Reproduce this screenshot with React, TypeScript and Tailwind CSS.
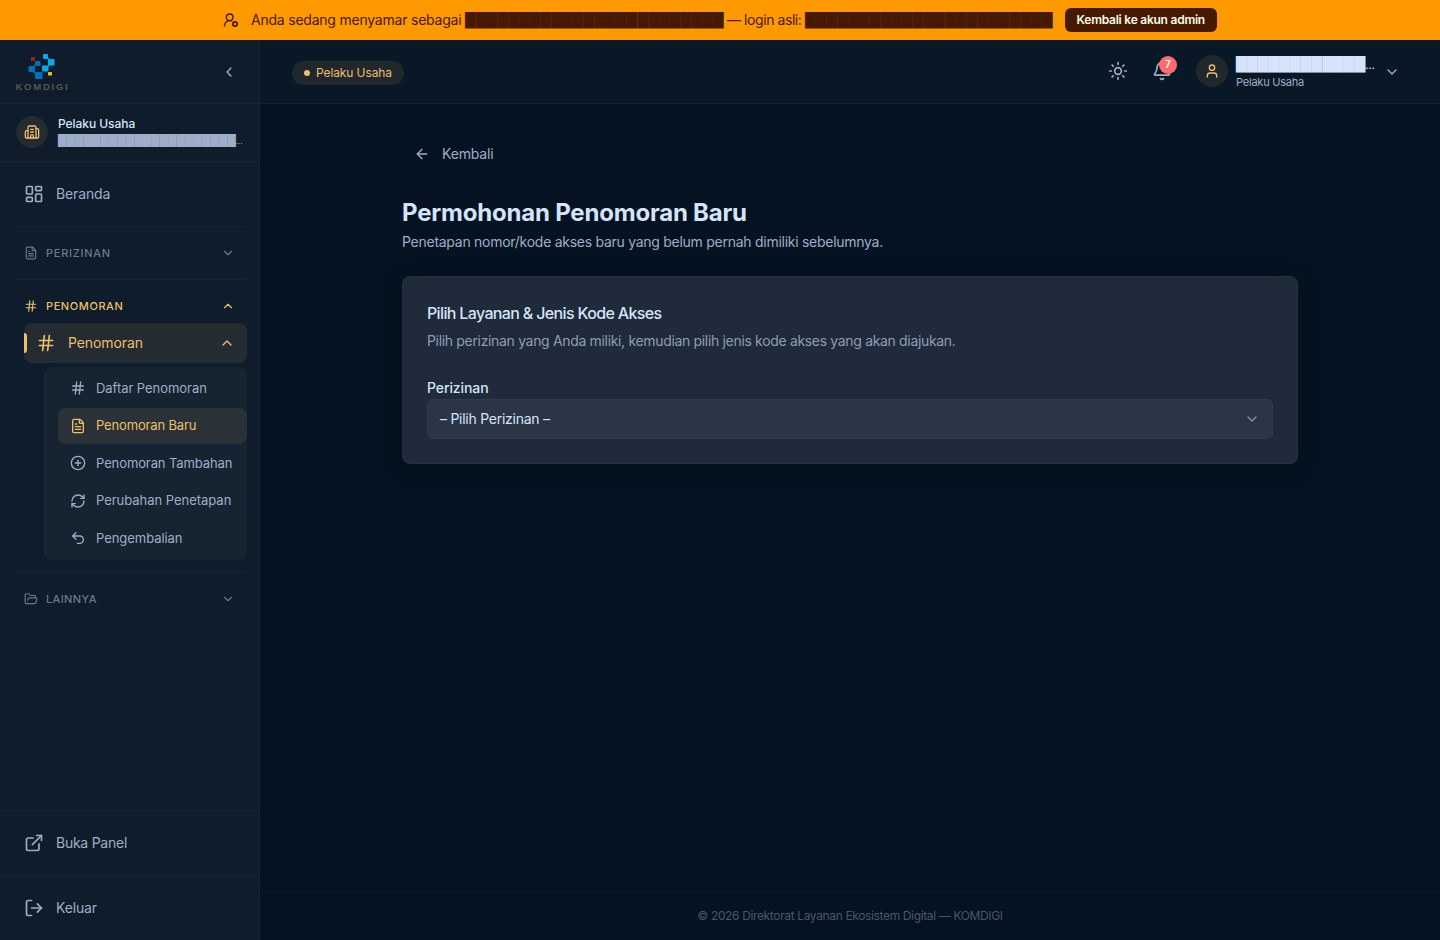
import type { ReactNode } from "react";
import {
  ArrowLeft,
  Bell,
  ChevronDown,
  ChevronLeft,
  ChevronUp,
  CirclePlus,
  ExternalLink,
  FileText,
  FolderOpen,
  Hash,
  LayoutDashboard,
  LogOut,
  RefreshCw,
  Sun,
  Undo2,
  User,
  UserRoundCog,
  Building2,
} from "lucide-react";

const submenu = [
  { label: "Daftar Penomoran", icon: Hash, spacing: "tracking-[-0.05px]" },
  { label: "Penomoran Baru", icon: FileText, active: true, spacing: "tracking-[-0.15px]" },
  { label: "Penomoran Tambahan", icon: CirclePlus, spacing: "tracking-[-0.1px]" },
  { label: "Perubahan Penetapan", icon: RefreshCw, spacing: "tracking-[-0.03px]" },
  { label: "Pengembalian", icon: Undo2, spacing: "tracking-[-0.05px]" },
];

function Masked({ count }: { count: number }) {
  return <span className="font-['DejaVu_Sans'] tracking-normal">{"█".repeat(count)}</span>;
}

function Logo() {
  return (
    <svg width="54" height="38" viewBox="0 0 54 38">
      <g fill="#0072bc">
        <rect x="20" y="8" width="5.5" height="5" rx="1" />
        <rect x="13.5" y="13" width="6.5" height="6" rx="1" />
        <rect x="20" y="19" width="7.5" height="7" rx="1" />
        <path d="M18.5 13L20 11.5V14ZM18 19L20 21V18Z" />
      </g>
      <g fill="#00aeef">
        <rect x="28" y="1" width="5" height="5" rx="1" />
        <rect x="33" y="6" width="6.5" height="6.5" rx="1" />
        <rect x="27" y="12.5" width="6.5" height="6" rx="1" />
        <path d="M32 5L34 7.5V5ZM32 13.5L34 11V13.5Z" />
      </g>
      <rect x="16" y="4" width="4" height="4" rx="0.5" fill="#a31d21" />
      <rect x="33" y="19" width="4" height="3.5" rx="0.5" fill="#f5b91a" />
      <text
        x="0.5"
        y="36.5"
        fontFamily="Liberation Sans"
        fontWeight="700"
        fontSize="9.5"
        letterSpacing="1.75"
        fill="#55565a"
      >
        KOMDIGI
      </text>
    </svg>
  );
}

type SectionProps = { icon: ReactNode; label: string; spacing: string; open?: boolean };

function Section({ icon, label, spacing, open }: SectionProps) {
  return (
    <div
      className={`flex h-8 items-center gap-2 px-3 text-[11px] font-medium ${
        open ? "text-[#ecbf68]" : "text-[#69788e]"
      }`}
    >
      {icon}
      <span className={`flex-1 pt-0.5 ${spacing}`}>{label}</span>
      {open ? <ChevronUp size={14} /> : <ChevronDown size={14} />}
    </div>
  );
}

export default function App() {
  return (
    <div className="flex h-[940px] flex-col overflow-hidden bg-[#051221] font-['Inter',sans-serif] text-sm text-[#d5e4fb]">
      <div className="flex h-10 shrink-0 items-center justify-center gap-3 bg-[#ff9900] text-[#461901]">
        <UserRoundCog size={16} />
        <span className="whitespace-nowrap">
          <span className="tracking-[-0.22px]">Anda sedang menyamar sebagai </span>
          <Masked count={24} />
          <span className="tracking-[-0.43px]"> — login asli: </span>
          <Masked count={23} />
        </span>
        <button className="h-6 rounded-md bg-[#461901] px-3 text-xs font-semibold tracking-[-0.24px] text-[#fffbeb]">
          Kembali ke akun admin
        </button>
      </div>

      <div className="flex min-h-0 flex-1">
        <aside className="flex w-[260px] shrink-0 flex-col border-r border-[#152332] bg-[#0e1c2b] text-[#9eaec8]">
          <div className="flex h-16 shrink-0 items-center justify-between border-b border-[#152332] pl-[15px] pr-[22px]">
            <Logo />
            <ChevronLeft size={16} />
          </div>
          <div className="flex h-[58px] shrink-0 items-center gap-2.5 border-b border-[#152332] px-4">
            <div className="mb-px flex size-8 shrink-0 items-center justify-center rounded-full bg-[#242b31] text-[#ecbf68]">
              <Building2 size={16} />
            </div>
            <div className="whitespace-nowrap">
              <p className="text-xs leading-4 font-medium tracking-[-0.05px] text-[#d5e4fb]">
                Pelaku Usaha
              </p>
              <p className="text-[11px] leading-4">
                <Masked count={21} />
                <span className="text-[8px]">…</span>
              </p>
            </div>
          </div>

          <nav className="flex-1 px-3 pt-3">
            <div className="flex h-10 items-center gap-3 px-3">
              <LayoutDashboard size={20} />
              <span className="tracking-[-0.13px]">Beranda</span>
            </div>
            <div className="mt-3 border-t border-[#152332] pt-2.5 pb-2.5">
              <Section icon={<FileText size={14} />} label="PERIZINAN" spacing="tracking-[0.72px]" />
            </div>
            <div className="border-t border-[#152332] pt-2.5 pb-3">
              <Section icon={<Hash size={14} />} label="PENOMORAN" spacing="tracking-[0.58px]" open />
              <div className="relative ml-3 mt-px flex h-10 items-center gap-3 rounded-lg bg-[#242b31] px-3 text-[#ecbf68]">
                <span className="absolute left-0 h-5 w-[3px] rounded-r-sm bg-[#ecbf68]" />
                <Hash size={20} />
                <span className="flex-1 tracking-[-0.08px]">Penomoran</span>
                <ChevronUp size={16} />
              </div>
              <div className="mt-1 ml-8 flex h-[193px] flex-col gap-[1.5px] rounded-lg border-l-2 border-[#192735] bg-[#162331] pl-3 pt-[3px] text-[13px]">
                {submenu.map(({ label, icon: Icon, active, spacing }) => (
                  <div
                    key={label}
                    className={`flex h-9 shrink-0 items-center gap-2.5 rounded-lg px-3 whitespace-nowrap ${spacing} ${
                      active ? "bg-[#2b3237] text-[#ecbf68]" : ""
                    }`}
                  >
                    <Icon size={16} className="shrink-0" />
                    {label}
                  </div>
                ))}
              </div>
            </div>
            <div className="border-t border-[#152332] pt-2.5">
              <Section icon={<FolderOpen size={14} />} label="LAINNYA" spacing="tracking-[0.36px]" />
            </div>
          </nav>

          <div className="flex h-[65px] items-center gap-3 border-t border-[#152332] px-6">
            <ExternalLink size={20} />
            <span className="tracking-[-0.25px]">Buka Panel</span>
          </div>
          <div className="flex h-[65px] items-center gap-3 border-t border-[#152332] px-6">
            <LogOut size={20} />
            <span className="tracking-[-0.15px]">Keluar</span>
          </div>
        </aside>

        <div className="flex flex-1 flex-col">
          <header className="flex h-16 shrink-0 items-center justify-between border-b border-[#111f2e] bg-[#091827] pr-10 pl-8">
            <div className="mt-0.5 flex h-6 items-center gap-1.5 rounded-full bg-[#20282e] px-3 text-xs tracking-[-0.1px] text-[#ecbf68]">
              <span className="size-1.5 rounded-full bg-[#ecbf68]" />
              Pelaku Usaha
            </div>
            <div className="flex items-center text-[#9eaec8]">
              <Sun size={20} className="mb-0.5" />
              <div className="relative mb-0.5 ml-6">
                <Bell size={20} />
                <span className="absolute top-[-5px] left-[7px] flex size-[18px] items-center justify-center rounded-full bg-[#ff6b6b] text-[10px] font-semibold text-white">
                  7
                </span>
              </div>
              <div className="mb-0.5 ml-6 flex size-8 items-center justify-center rounded-full bg-[#20282e] text-[#ecbf68]">
                <User size={16} />
              </div>
              <div className="ml-2 w-[140px] whitespace-nowrap">
                <p className="mt-px -mb-px leading-5">
                  <span className="text-[#d5e4fb]">
                    <Masked count={12} />
                    <span className="text-[10px] font-semibold tracking-[-1px]">…</span>
                  </span>
                </p>
                <p className="text-[11px] leading-4 tracking-[-0.22px]">Pelaku Usaha</p>
              </div>
              <ChevronDown size={16} className="ml-2" />
            </div>
          </header>

          <main className="mx-auto w-[896px] flex-1 pt-8">
            <button className="flex h-9 items-center gap-3 px-3 tracking-[-0.17px] text-[#9eaec8]">
              <ArrowLeft size={16} />
              Kembali
            </button>
            <h1 className="mt-[25px] text-2xl leading-8 font-bold tracking-[-0.2px]">
              Permohonan Penomoran Baru
            </h1>
            <p className="mt-[3px] leading-5 tracking-[-0.27px] text-[#9eaec8]">
              Penetapan nomor/kode akses baru yang belum pernah dimiliki sebelumnya.
            </p>
            <section className="mt-6 h-[188px] rounded-lg border border-[#25323f] bg-[#1f2b3a] p-6 shadow-[0_4px_24px_rgba(0,0,0,0.2)]">
              <h2 className="text-base leading-6 font-medium tracking-[-0.65px]">
                Pilih Layanan & Jenis Kode Akses
              </h2>
              <p className="mt-1.5 leading-5 tracking-[-0.33px] text-[#8d9db5]">
                Pilih perizinan yang Anda miliki, kemudian pilih jenis kode akses yang akan diajukan.
              </p>
              <label className="mt-[27px] block leading-5 font-medium tracking-[-0.1px]">Perizinan</label>
              <div className="mt-px flex h-10 items-center justify-between rounded-md border border-[#303c4a] bg-[#2a3645] px-3">
                <span className="tracking-[-0.26px]">– Pilih Perizinan –</span>
                <ChevronDown size={16} className="text-[#8391a6]" />
              </div>
            </section>
          </main>

          <footer className="flex h-[49px] items-center justify-center border-t border-[#0e1b2a] text-xs tracking-[-0.36px] text-[#495669]">
            © 2026 Direktorat Layanan Ekosistem Digital — KOMDIGI
          </footer>
        </div>
      </div>
    </div>
  );
}
